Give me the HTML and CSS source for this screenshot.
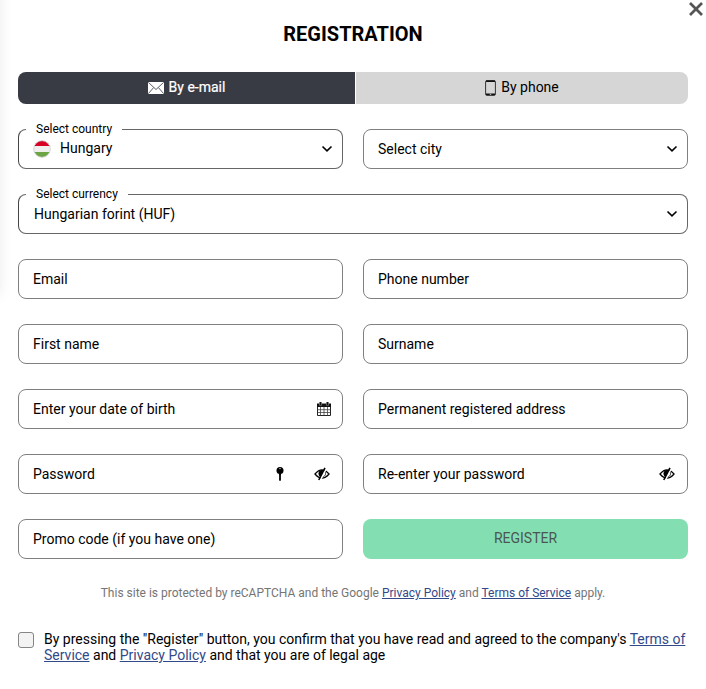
FILE: index.html
```html
<!DOCTYPE html>
<html lang="en">
<head>
<meta charset="utf-8">
<title>Registration</title>
<link rel="stylesheet" href="styles.css">
</head>
<body>
<svg class="defs" width="0" height="0" aria-hidden="true">
  <symbol id="chevron" viewBox="0 0 12 8"><path d="M1.500 1.500 6 5.800l4.500-4.300" fill="none" stroke="currentColor" stroke-width="1.600"/></symbol>
  <symbol id="eye-off" viewBox="0 0 16 14">
    <path d="M1 7Q8-1.200 15 7Q8 15.200 1 7Z" fill="none" stroke="currentColor" stroke-width="1.300"/>
    <path d="M9.500 3.300C6.500 2.200 4.500 4 4.500 6.500c0 1.700.8 3 2 3.800Z" fill="currentColor"/>
    <path d="M10.900 4.200c1.300 1.900.8 4.900-2 5.800" fill="none" stroke="currentColor" stroke-width=".8"/>
    <path d="M12.600.8 6.300 13.200" stroke="#fff" stroke-width="1.600"/>
    <path d="M11 .8 4.800 13" stroke="currentColor" stroke-width="1.600"/>
  </symbol>
</svg>
<main class="page">
  <button class="close" aria-label="Close"><svg width="16" height="16" viewBox="0 0 16 16"><path d="M2 2l12 12M14 2 2 14" stroke="#555" stroke-width="2.700"/></svg></button>
  <h1 class="title">REGISTRATION</h1>
  <div class="tabs">
    <button class="tab tab-active"><svg width="16" height="12" viewBox="0 0 16 12"><path d="M0 0h16v12H0z" fill="#fff"/><path d="M.3.3 8 7.500 15.700.3M.3 11.700 5.500 5.700M15.700 11.700l-5.200-6" fill="none" stroke="#4b4d57" stroke-width=".9"/></svg><span>By e-mail</span></button>
    <button class="tab"><svg class="phone" width="11" height="16" viewBox="0 0 11 16"><rect x=".6" y=".6" width="9.800" height="14.800" rx="1.200" fill="none" stroke="#333" stroke-width="1"/><path d="M1 1.300h9M1 14.300h9" stroke="#111" stroke-width="1.600"/><path d="M4.800 14.300h1.400" stroke="#d6d6d6"/></svg><span>By phone</span></button>
  </div>
  <form class="form">
    <div class="field selected country"><label class="caption">Select country</label>
      <svg class="flag" width="18" height="18" viewBox="0 0 18 18"><clipPath id="disc"><circle cx="9" cy="9" r="8.200"/></clipPath><g clip-path="url(#disc)"><path d="M0 0h18v18H0z" fill="#efefef"/><path d="M0 0h18v6H0z" fill="#d80027"/><path d="M0 12h18v6H0z" fill="#6da544"/></g><circle cx="9" cy="9" r="8.300" fill="none" stroke="#ccc" stroke-width=".8"/></svg>
      <span class="value">Hungary</span><svg class="chevron"><use href="#chevron"/></svg></div>
    <div class="field"><span class="value">Select city</span><svg class="chevron"><use href="#chevron"/></svg></div>
    <div class="field selected wide"><label class="caption">Select currency</label><span class="value">Hungarian forint (HUF)</span><svg class="chevron"><use href="#chevron"/></svg></div>
    <div class="field"><span class="value">Email</span></div>
    <div class="field"><span class="value">Phone number</span></div>
    <div class="field"><span class="value">First name</span></div>
    <div class="field"><span class="value">Surname</span></div>
    <div class="field"><span class="value">Enter your date of birth</span>
      <svg class="calendar" width="14" height="14" viewBox="0 0 14 14"><path d="M.5 2.500h13v11H.5z" fill="none" stroke="#222"/><path d="M0 1.500h14V5H0z" fill="#111"/><path d="M3.500 5v8.500M7 5v8.500M10.500 5v8.500M.5 7.700h13M.5 10.500h13" stroke="#444" stroke-width=".8"/><path d="M3.500 0v3.500M10.500 0v3.500" stroke="#aaa" stroke-width="2.600"/><path d="M3.500 0v3.200M10.500 0v3.200" stroke="#111" stroke-width="1.700"/></svg></div>
    <div class="field"><span class="value">Permanent registered address</span></div>
    <div class="field"><span class="value">Password</span>
      <svg class="key" width="8" height="14" viewBox="0 0 8 14"><circle cx="4" cy="3.600" r="3.500"/><path d="M3 6h2v7.200l-1 .8-1-.8Z"/><path d="M4 8v5" stroke="#888" stroke-width=".4"/><circle cx="4" cy="1.600" r=".7" fill="#fff"/></svg>
      <svg class="eye"><use href="#eye-off"/></svg></div>
    <div class="field"><span class="value">Re-enter your password</span><svg class="eye"><use href="#eye-off"/></svg></div>
    <div class="field"><span class="value">Promo code (if you have one)</span></div>
    <button class="register" type="button">REGISTER</button>
  </form>
  <p class="notice">This site is protected by reCAPTCHA and the Google <a href="#">Privacy Policy</a> and <a href="#">Terms of Service</a> apply.</p>
  <div class="consent"><span class="checkbox" role="checkbox" aria-checked="false" tabindex="0"></span><p>By pressing the "Register" button, you confirm that you have read and agreed to the company's <a href="#">Terms of Service</a> and <a href="#">Privacy Policy</a> and that you are of legal age</p></div>
</main>
</body>
</html>
```
FILE: styles.css
```css
* { box-sizing: border-box; }
body { margin: 0; background: #fff; color: #000; font: 14px/16px Roboto, "Liberation Sans", sans-serif; overflow: hidden; }
button { border: 0; padding: 0; font: inherit; color: inherit; }
h1, p { margin: 0; }
svg { display: block; flex: none; }
.defs { position: absolute; }
.page { position: relative; height: 689px; padding: 22px 18px 0; }
.page::before { content: ""; position: absolute; left: -20px; top: -20px; width: 20px; height: 315px; box-shadow: 0 0 14px rgba(0, 0, 0, .08); }
.close { position: absolute; top: 1px; right: 2px; background: none; }
.title { font-size: 20px; line-height: 24px; font-weight: 700; text-align: center; }
.tabs { display: grid; grid-template-columns: 337px 332px; gap: 1px; margin-top: 26px; height: 32px; border-radius: 8px; overflow: hidden; }
.tab { display: flex; align-items: center; justify-content: center; gap: 5px; background: #d6d6d6; padding-bottom: 2px; }
.tab svg { margin-top: 2px; }
.tab-active { background: #383b44; color: #fff; -webkit-text-stroke: .2px #fff; }
.form { display: grid; grid-template-columns: 325px 325px; gap: 25px 20px; margin-top: 25px; grid-auto-rows: 40px; }
.field { position: relative; display: flex; align-items: center; border: 1px solid #808080; border-radius: 8px; padding: 0 9px 0 14px; }
.selected { border-color: #666; border-left-color: #444; padding-left: 15px; }
.country { padding-left: 14px; }
.country .value { margin-top: -2px; }
.wide { grid-column: span 2; }
.caption { position: absolute; left: 7px; top: -9px; padding: 0 10px; background: #fff; font-size: 12px; line-height: 16px; }
.value { flex: 1; }
.flag { margin-right: 9px; }
.chevron { width: 12px; height: 8px; }
.calendar { margin-right: 2px; }
.key { margin-right: 30px; }
.eye { width: 16px; height: 14px; margin-right: 3px; }
.register { background: #83dfb2; border-radius: 8px; color: #4b5552; padding-bottom: 2px; }
.notice { margin-top: 26px; text-align: center; color: #757575; font-size: 12px; line-height: 16px; }
a { color: #32498a; text-decoration: underline; }
.consent { display: flex; gap: 10px; margin-top: 30px; }
.checkbox { flex: none; width: 16px; height: 16px; margin-top: 1px; border: 1px solid #858585; border-radius: 3px; background: #f3f3f3; }
```
